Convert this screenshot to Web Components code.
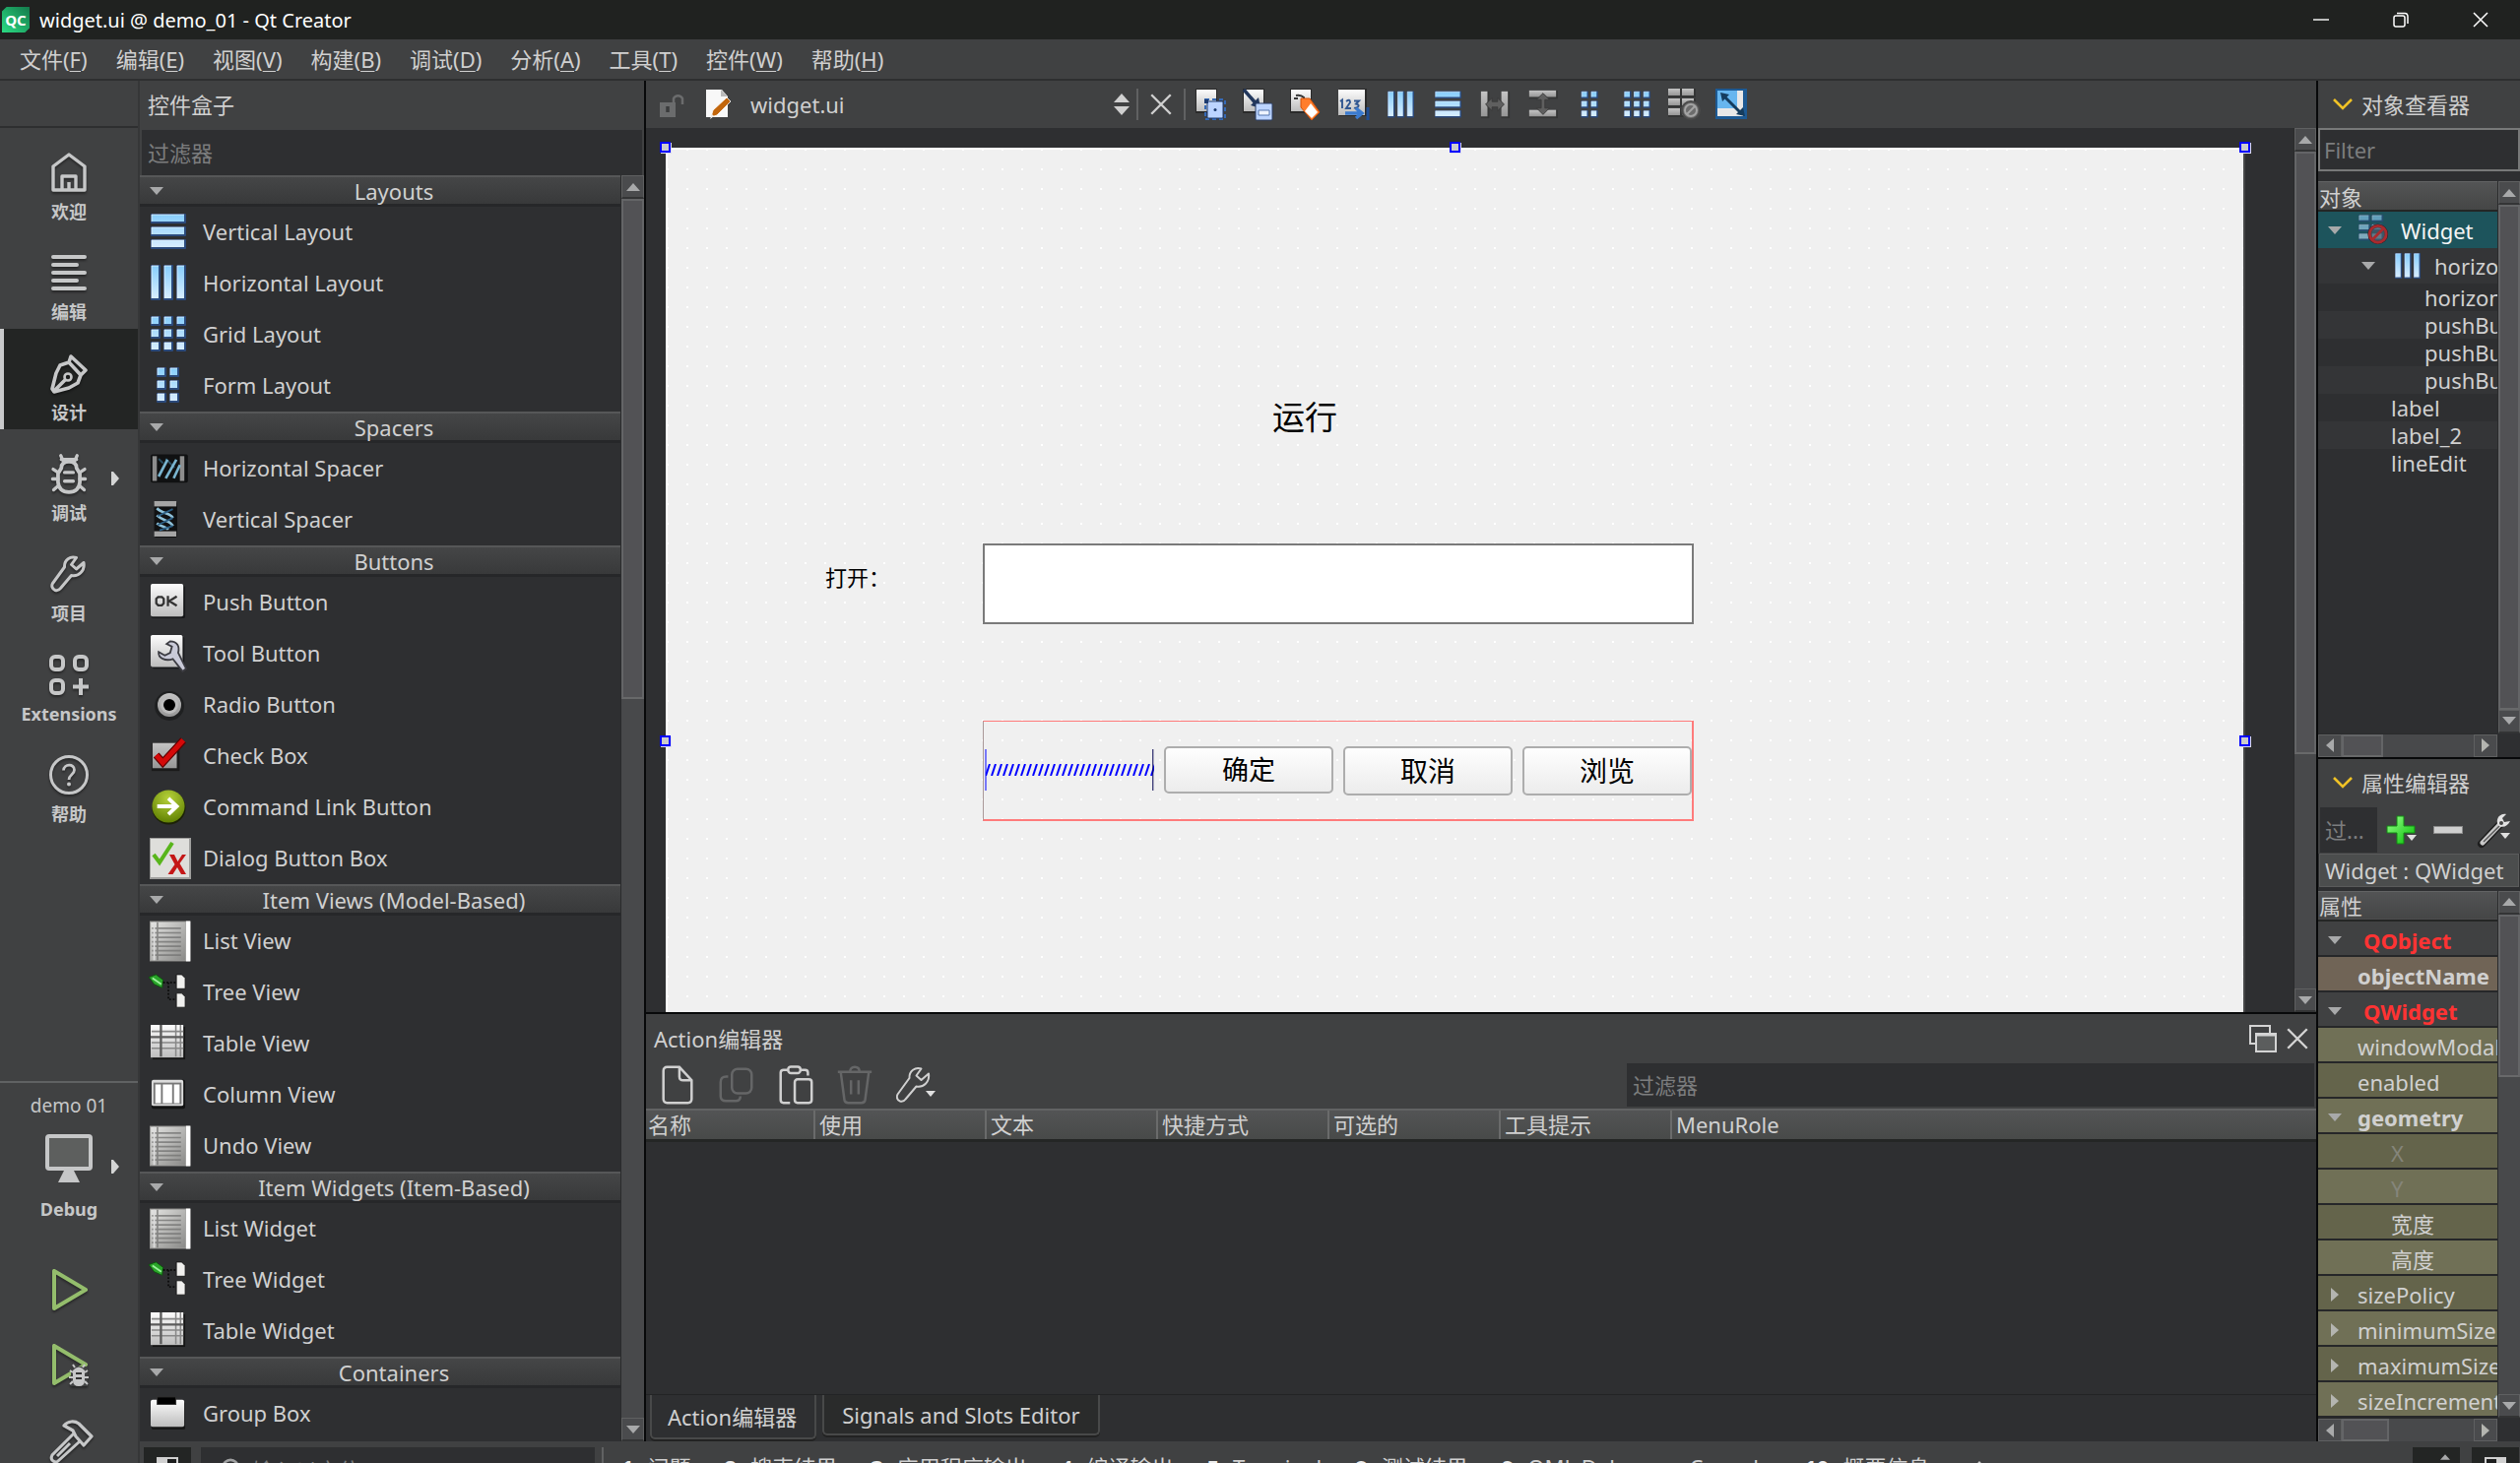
<!DOCTYPE html>
<html lang="zh-CN">
<head>
<meta charset="utf-8">
<title>widget.ui @ demo_01 - Qt Creator</title>
<style>
html,body{margin:0;height:100%;overflow:hidden;background:#2e2f30}
body{font:22px/28px "Noto Sans","Noto Sans CJK SC",sans-serif;color:#d0d0d0;
--panel:#404142;--dark:#2e2f31;--text:#d0d0d0;--dim:#7c7d7e;--line:#08090a;--deep:#232524}
</style>
</head>
<body>
<qc-window></qc-window>
<script>
const RESET = `<style>
*{box-sizing:border-box}
button,input{font:inherit;color:inherit;background:none;border:0;border-radius:0;margin:0;padding:0;outline:0}
button{text-align:inherit}
input::placeholder{color:var(--dim);opacity:1}
</style>`;
function define(name, css, html) {
  customElements.define(name, class extends HTMLElement {
    constructor() { super(); this.attachShadow({ mode: 'open' }); }
    connectedCallback() {
      this.shadowRoot.innerHTML = RESET + '<style>' + css + '</style>' + (typeof html === 'function' ? html(this) : html);
    }
  });
}

/* ---------- icon library ---------- */
const blueBar = (x, y, w, h) => `<rect x="${x}" y="${y}" width="${w + 1}" height="${h + 1}" rx="1" fill="#2b4a7c"/><rect x="${x + 1}" y="${y + 1}" width="${w - 2}" height="${h - 2}" fill="url(#b)"/><path d="M${x + 1} ${y + 1}h${w - 2}M${x + 1} ${y + 1}v${h - 2}" stroke="#f2faff" stroke-opacity=".7" fill="none"/>`;
const grayBar = (x, y, w, h) => `<rect x="${x}" y="${y}" width="${w + 1}" height="${h + 1}" fill="#2d2d2d" opacity=".6"/><rect x="${x}" y="${y}" width="${w - 1}" height="${h - 1}" fill="url(#g)"/>`;
const G = `<defs>
<linearGradient id="b" gradientUnits="userSpaceOnUse" x1="0" y1="0" x2="0" y2="36"><stop offset="0" stop-color="#85cdfc"/><stop offset="1" stop-color="#dcefff"/></linearGradient>
<linearGradient id="g" x1="0" y1="0" x2="0" y2="1"><stop offset="0" stop-color="#c4c4c4"/><stop offset="1" stop-color="#969696"/></linearGradient>
<linearGradient id="w" x1="0" y1="0" x2="0" y2="1"><stop offset="0" stop-color="#fcfcfc"/><stop offset="1" stop-color="#bdbdbd"/></linearGradient>
<linearGradient id="l" x1="0" y1="0" x2="1" y2="1"><stop offset="0" stop-color="#e4e4e2"/><stop offset="1" stop-color="#8a8a88"/></linearGradient>
<radialGradient id="r" cx=".5" cy=".25" r=".8"><stop offset="0" stop-color="#b6d13a"/><stop offset="1" stop-color="#5c7d00"/></radialGradient>
<linearGradient id="gr" x1="0" y1="0" x2="1" y2="1"><stop offset="0" stop-color="#9bff8e"/><stop offset="1" stop-color="#00c000"/></linearGradient></defs>`;
const tri = (c, d) => `<path d="${d}" fill="${c}"/>`;
const wrench = (sw) => `<path fill="none" stroke="currentColor" stroke-width="${sw}" stroke-linejoin="round" d="M27.5 3.5C21.500 1.500 15 5.500 15.500 13L3.500 29.500C2 32 3 35.500 6 36.500C8.500 37 10.500 36 11.500 34.500L22.500 21.500C29.500 23 36.500 17 35 8.500L27.500 15L22.500 10.500Z"/>`;
const bug = `<path fill="none" stroke="currentColor" stroke-width="3.400" stroke-linejoin="round" d="M11 14Q11 8 18 8T25 14L28 19V27Q27 36 18 36T8 27V19Z"/><path stroke="currentColor" stroke-width="3" stroke-linecap="round" fill="none" d="M13 8L10.500 2.500M23 8L25.500 2.500M11 6H25M8 18L3.500 15M28 18L32.500 15M8 24H3M28 24H33M8.500 30L4 34M27.500 30L32 34M14 18H22M14 26H22"/>`;
const listIcon = `<rect x="0" y="0" width="36" height="36" fill="#9a9a98"/><rect x="1" y="1" width="31" height="34" fill="url(#l)"/><path d="M7 1V35M2 6.500H28M2 10.500H28M2 14.500H28M2 18.500H28M2 22.500H28M2 26.500H28M2 30.500H28" stroke="#767674" stroke-width="1.500" fill="none" opacity=".8"/><path d="M4 1V35" stroke="#ddd" stroke-width="1.500"/><rect x="32.500" width="4" height="36" fill="#fff"/>`;
const sheet = `<rect x="0" y="0" width="22" height="25" fill="#2a2a2a"/><rect x="1" y="1" width="20" height="22" fill="url(#w)"/>`;
const ICONS = {
  vlayout: ['0 0 36 36', G + blueBar(0, 0, 35, 9) + blueBar(0, 13, 35, 9) + blueBar(0, 26, 35, 9)],
  hlayout: ['0 0 36 36', G + blueBar(0, 0, 9, 35) + blueBar(13, 0, 9, 35) + blueBar(26, 0, 9, 35)],
  grid: ['0 0 36 36', G + [0, 13, 26].map(y => [0, 13, 26].map(x => blueBar(x, y, 9, 9)).join('')).join('')],
  form: ['0 0 36 36', G + [0, 13, 26].map(y => [6, 19].map(x => blueBar(x, y, 9, 9)).join('')).join('')],
  hspacer: ['0 0 40 36', G + `<rect y="3" width="42" height="32" rx="2" fill="#101112"/><rect x="2" y="5" width="5" height="28" fill="#8d8d8d"/><rect x="33" y="5" width="5" height="28" fill="#8d8d8d"/><path d="M9 8L14 13M17 8L27 18" stroke="#294b5e" stroke-width="2"/><path d="M9 28L19 9M17 30L29 9M26 30L33 15" stroke="#79b4cf" stroke-width="3"/>`],
  vspacer: ['0 0 40 40', G + `<rect x="4" y="1" width="26" height="40" rx="2" fill="#101112"/><rect x="4" y="0" width="25" height="6" fill="#a5a5a5"/><rect x="4" y="34" width="25" height="6" fill="#a5a5a5"/><path d="M7 8C13 14 23 14 25 19M7 16C13 22 23 22 25 28M7 25C12 29 18 29 20 32" stroke="#8fc1d8" stroke-width="3" fill="none"/><path d="M25 9L8 17M25 19L8 27M25 28L10 33" stroke="#2c5f85" stroke-width="2"/>`],
  push: ['0 0 38 38', G + `<rect x="1" y="2" width="36" height="35" rx="2" fill="#17181a"/><rect x="0" y="0" width="35" height="35" rx="2" fill="url(#w)"/><path d="M8 14h4l2 2v5l-2 2h-4l-2-2v-5zM18.500 13v11M28 13.500l-8 5l8 5" stroke="#333" stroke-width="2.400" fill="none"/>`],
  tool: ['0 0 40 40', G + `<rect x="2" y="2" width="36" height="36" rx="2" fill="#17181a"/><rect x="0" y="0" width="36" height="36" rx="2" fill="url(#w)"/><path d="M22 7C30 7 33 13 31 20L40 38L36 41L25 27C17 30 8 26 9 19L16 23L22 20L24 13L18 10Z" fill="#c9cad8" stroke="#3c3c42" stroke-width="2"/>`],
  radio: ['0 0 36 36', G + `<circle cx="19" cy="20" r="15" fill="#1f2021"/><circle cx="19" cy="19" r="12" fill="url(#g)"/><circle cx="19" cy="19" r="9" fill="#bcbcbc"/><circle cx="19" cy="19" r="6" fill="#000"/>`],
  check: ['0 0 38 38', G + `<rect x="1" y="6" width="30" height="30" fill="#1b1b1b"/><rect x="2" y="6" width="26" height="27" fill="url(#g)"/><path d="M6 19l7 8L35 3" fill="none" stroke="#5d0000" stroke-width="8"/><path d="M6 19l7 8L35 3" fill="none" stroke="#d40909" stroke-width="5.500"/>`],
  command: ['0 0 38 38', G + `<circle cx="19.500" cy="20.500" r="18" fill="#1c2206"/><circle cx="19" cy="19" r="17.500" fill="url(#r)"/><path d="M7 19H26M19 10.500L28 19L19 27.500" fill="none" stroke="#fff" stroke-width="4"/>`],
  dialog: ['0 0 42 42', G + `<rect width="42" height="42" fill="#9f9f9d"/><rect x="1" y="1" width="39" height="39" fill="#dededb"/><path d="M4 17l6 8L23 5" fill="none" stroke="#58b51b" stroke-width="4"/><path d="M20 17h5l3.500 7L33 17h4l-6.500 9L37 37h-5l-4-7l-4.500 7h-5l7-10z" fill="#c41717"/>`],
  list: ['0 0 37 36', G + listIcon],
  tree: ['0 0 40 40', G + `<path d="M-2 4L6 1L14 7L13 16L4 12Z" fill="#2aa52a" stroke="#0c4f0c"/><path d="M2 5L12 12" stroke="#9df09d" stroke-width="2"/><path d="M14 10H28M20 10V29H28" stroke="#0d0d0d" stroke-width="2" stroke-dasharray="2 2" fill="none"/><path d="M29 1h6l4 4v12h-10zM29 22h6l4 4v12h-10z" fill="#f0f0ee" stroke="#151515"/>`],
  table: ['0 0 38 38', G + `<rect x="2" y="2" width="35" height="35" fill="#141414"/><rect x="0" y="0" width="35" height="35" fill="url(#w)"/><path d="M27 0V34M32 0V34M1 7H35M1 19H35M1 25H35" stroke="#888" stroke-width="1.600" fill="none"/><path d="M11 0V34M0 13H35" stroke="#5c5c5c" stroke-width="2.500"/>`],
  column: ['0 0 38 38', G + `<rect x="1" y="4" width="36" height="31" rx="2" fill="#131313"/><rect x="1" y="4" width="34" height="28" rx="2" fill="#dcdcdc"/><rect x="3" y="7" width="30" height="23" fill="#777"/><path d="M5 9h6v20H5zM13 9h10v20H13zM25 9h6v20H25z" fill="#fff"/>`],
  group: ['0 0 38 38', G + `<rect x="1" y="7" width="36" height="30" rx="2" fill="#161616"/><rect x="0" y="5" width="36" height="29" rx="2" fill="url(#w)"/><rect x="7" y="2" width="20" height="8" fill="#000" stroke="#333"/>`],
  home: ['0 0 40 42', `<path fill="none" stroke="currentColor" stroke-width="3.400" stroke-linejoin="round" d="M4 39V15L20 3L36 15V39ZM13 39V25H27V39M20 39V31"/>`],
  edit: ['0 0 40 42', `<path stroke="currentColor" stroke-width="4" stroke-linecap="round" d="M4 5H36M4 13H28M4 21H36M4 29H28M4 37H36"/>`],
  design: ['0 0 40 42', `<path fill="none" stroke="currentColor" stroke-width="3.600" stroke-linejoin="round" d="M22 4L37 18L32 23L29 31L20 36L5 40L3 37L7 21L11 13L20 10ZM20 10L32 23M5 39L17 27"/><circle cx="19" cy="25" r="3.500" fill="none" stroke="currentColor" stroke-width="2.600"/>`],
  bug: ['0 0 36 38', bug],
  wrench: ['0 0 40 40', wrench(3)],
  wrenchthin: ['0 0 40 40', wrench(2)],
  ext: ['0 0 40 42', `<g fill="none" stroke="currentColor" stroke-width="4"><rect x="2" y="3" width="12" height="13" rx="4"/><rect x="26" y="3" width="12" height="13" rx="4"/><rect x="2" y="27" width="12" height="13" rx="4"/><path d="M32 25V42M24 33.500H40"/></g>`],
  help: ['0 0 40 42', `<circle cx="20" cy="21" r="18.500" fill="none" stroke="currentColor" stroke-width="3"/><path d="M14.500 16.500C15 9.500 25.500 9.500 25.500 16C25.500 21 20 20.500 20 26" fill="none" stroke="currentColor" stroke-width="2.800"/><circle cx="20" cy="30.500" r="2" fill="currentColor"/>`],
  monitor: ['0 0 48 50', `<rect x="2" y="2" width="44" height="33" rx="2" fill="#5d5f5e" stroke="currentColor" stroke-width="4"/><path d="M19 37H29L35 49H13Z" fill="currentColor"/>`],
  play: ['0 0 38 44', `<path d="M3 3V41L35 22Z" fill="none" stroke="#94bd6c" stroke-width="4" stroke-linejoin="round"/>`],
  playbug: ['0 0 38 44', `<path d="M3 3V41L35 22Z" fill="none" stroke="#94bd6c" stroke-width="4" stroke-linejoin="round"/><path d="M20 44V27L24 24H37V44Z" fill="#404142"/><path d="M22 28Q28 21 34 28V38Q34 44 28 44T22 38Z" fill="#c6c7c8"/><path d="M24 25L22 22M32 25L34 22M22 30L19 28M34 30L37 28M22 35H18M34 35H38M22 39L19 42M34 39L37 42" stroke="#c6c7c8" stroke-width="2"/><path d="M25 31H31M25 36H31" stroke="#333" stroke-width="2"/>`],
  hammer: ['0 0 46 44', `<path d="M15 6C19 1 26 1 30 4L43 17L35 26L27 17L24 11Z" fill="none" stroke="currentColor" stroke-width="3.200" stroke-linejoin="round"/><path d="M25 14L3 36Q1 40 4 42T9 42L31 22M21 24L8 37" fill="none" stroke="currentColor" stroke-width="3"/>`],
  lock: ['0 0 24 26', `<path d="M14 12V7A5 5 0 0 1 23 7V13" fill="none" stroke="#6b6c6d" stroke-width="2.500"/><rect x="0" y="11" width="16" height="15" fill="#6b6c6d"/><path d="M8 15v6" stroke="#3a3b3c" stroke-width="3.500"/>`],
  uifile: ['0 0 30 32', `<path d="M1 1H17L23 8V29H1Z" fill="#f8f8f8"/><path d="M16 1V8H23Z" fill="#bbb"/><path d="M6 29L8 22L22 9L26 13L12 27Z" fill="#c2660c" stroke="#fff" stroke-width=".8"/><path d="M5 31L7 26L9 28Z" fill="#eee"/>`],
  updown: ['0 0 18 22', tri('#d0d0d0', 'M9 0L17 9H1Z') + tri('#d0d0d0', 'M9 22L17 13H1Z')],
  x: ['0 0 24 24', `<path d="M3 3L21 21M21 3L3 21" stroke="currentColor" stroke-width="2.200"/>`],
  editwidgets: ['0 0 32 32', G + sheet + `<path d="M10 11h20v20H10z" fill="none" stroke="#3569b5" stroke-width="2" stroke-dasharray="4 3"/><rect x="12" y="13" width="16" height="17" rx="1" fill="#bcd4ff" stroke="#1d3b70"/><circle cx="20" cy="21.500" r="1.500" fill="#1d3b70"/><rect x="9" y="11" width="4" height="4" fill="#1d3b70"/>`],
  signals: ['0 0 32 32', G + sheet + `<path d="M1 1L15 17" stroke="#22375c" stroke-width="3.500"/><path d="M18 20L8 17L16 9Z" fill="#22375c"/><rect x="13" y="15" width="17" height="17" rx="1" fill="#bcd4ff" stroke="#2a3f66"/><path d="M16 22h11v5H16z" fill="#eef4ff" stroke="#5576ad"/>`],
  buddies: ['0 0 32 32', G + sheet + `<path d="M4 10h4M6 7q5-1 8 2v6" stroke="#333" stroke-width="2" fill="none"/><path d="M11 10L20 10L30 24L22 32L11 19Z" fill="#ff7d2c" stroke="#d65208"/><path d="M21 15L28 24L22 30L15 23Z" fill="#fff"/>`],
  tab: ['0 0 32 32', G + `<rect x="2" y="0" width="28" height="28" fill="#2a2a2a"/><rect x="1" y="1" width="27" height="26" fill="url(#w)"/><path d="M3 13l2-1.500V20M9 13q4-3 4 1L9 20h5M17 12.500h5l-3 3q4 1 2 3t-4 1" stroke="#315791" stroke-width="1.900" fill="none"/><path d="M8 25H24M19 20L25 25L19 30" stroke="#3b7bd0" stroke-width="3.500" fill="none"/><path d="M31 19V32" stroke="#1f4d93" stroke-width="3"/>`],
  hsplit: ['0 0 34 34', G + grayBar(2, 3, 8, 28) + grayBar(24, 3, 8, 28) + `<path d="M7 17L14 10V14H20V10L27 17L20 24V20H14V24Z" fill="#5f5f5f" stroke="#3a3a3a"/>`],
  vsplit: ['0 0 34 34', G + grayBar(3, 2, 30, 8) + grayBar(3, 23, 30, 8) + `<path d="M18 5L25 12H20V21H25L18 28L11 21H16V12H11Z" fill="#5f5f5f" stroke="#3a3a3a"/>`],
  breaklay: ['0 0 32 32', G + [0, 10, 20].map(y => grayBar(0, y, 13, 8) + grayBar(14, y, 13, 8)).join('') + `<circle cx="23" cy="22" r="9" fill="#6c6c6c" stroke="#4a4a4a" stroke-width="2"/><circle cx="23" cy="22" r="6" fill="none" stroke="#a4a4a4" stroke-width="2"/><path d="M19 26L27 18" stroke="#a4a4a4" stroke-width="2"/>`],
  breakcolor: ['0 0 34 34', G + [0, 10, 20].map(y => blueBar(1, y, 12, 7) + blueBar(15, y, 12, 7)).join('') + `<rect width="34" height="28" fill="#1d545c" opacity=".4"/><circle cx="22" cy="21" r="9" fill="none" stroke="#2c1c22" stroke-width="4"/><circle cx="22" cy="21" r="9" fill="#4e5a66" fill-opacity=".6" stroke="#a82b2e" stroke-width="3"/><path d="M16 27L28 15" stroke="#a82b2e" stroke-width="3"/>`],
  adjust: ['0 0 32 32', G + `<rect x="0" y="0" width="32" height="31" fill="#1d5a94"/><rect x="2" y="2" width="26" height="26" fill="#e8e8e8"/><rect x="2" y="2" width="20" height="18" fill="#67b6ef"/><path d="M8 7L26 25" stroke="#153c5e" stroke-width="3"/><path d="M5 4L14 6L7 13ZM30 28L21 26L28 19Z" fill="#153c5e"/>`],
  file: ['0 0 40 44', `<path d="M5 7Q5 3 9 3H22L35 17V37Q35 41 31 41H9Q5 41 5 37ZM22 3V13Q22 17 26 17H35" fill="none" stroke="currentColor" stroke-width="2.600"/>`],
  copy: ['0 0 40 44', `<rect x="15" y="5" width="21" height="26" rx="6" fill="none" stroke="currentColor" stroke-width="2.600"/><path d="M11 13H9Q3 13 3 19V34Q3 39 9 39H19Q24 39 24 34" fill="none" stroke="currentColor" stroke-width="2.600"/>`],
  paste: ['0 0 40 44', `<path d="M14 41H7Q4 41 4 38V9Q4 6 7 6H30Q33 6 33 9V12" fill="none" stroke="currentColor" stroke-width="2.600"/><rect x="12" y="2.500" width="13" height="7" rx="3" fill="#404142" stroke="currentColor" stroke-width="2.600"/><rect x="19" y="16" width="18" height="25" rx="3" fill="none" stroke="currentColor" stroke-width="2.600"/>`],
  trash: ['0 0 40 44', `<path d="M2 8H38M5 8L9 38Q9.500 41 13 41H27Q30.500 41 31 38L35 8M15 8Q15 3 20 3T25 8M16 17V32M24 17V32" fill="none" stroke="currentColor" stroke-width="2.600"/>`],
  restore: ['0 0 28 28', `<path d="M21 8V1H1V19H7" fill="none" stroke="#d4d4d4" stroke-width="2"/><rect x="7" y="9" width="20" height="18" fill="#5b5d5d" stroke="#d4d4d4" stroke-width="2"/><path d="M6 10H28" stroke="#d4d4d4" stroke-width="3"/>`],
  chevron: ['0 0 22 14', `<path d="M2 2L11 11L20 2" fill="none" stroke="#f0c226" stroke-width="2.600"/>`],
  plus: ['0 0 30 30', G + `<path d="M11 1H18V11H29V18H18V29H11V18H1V11H11Z" fill="url(#gr)" stroke="#128a12"/>`],
  minus: ['0 0 30 8', `<rect width="30" height="8" fill="#8b8b8b"/><rect x="1" y="1" width="28" height="6" fill="#cfcfcf"/>`],
  steelwrench: ['0 0 34 34', `<path d="M3 31L22 11" stroke="#1e1e1e" stroke-width="8" stroke-linecap="round"/><path d="M4 30L22 11" stroke="#c9c9c9" stroke-width="5" stroke-linecap="round"/><path d="M5 29L21 13" stroke="#555" stroke-width="1.500"/><path d="M28 1C21 0 18 5 19 11C23 16 29 14 32 8L26 9L24 5Z" fill="#e2e2e2"/><circle cx="23" cy="10" r="2" fill="#444"/>`],
  min: ['0 0 16 16', `<path d="M0 8H16" stroke="#fff" stroke-width="1.400"/>`],
  max: ['0 0 16 16', `<rect x="1" y="4" width="11" height="11" rx="2" fill="none" stroke="#fff" stroke-width="1.500"/><path d="M4 1.500H12Q15 1.500 15 5V12" fill="none" stroke="#fff" stroke-width="1.500"/>`],
  close: ['0 0 16 16', `<path d="M1 1L15 15M15 1L1 15" stroke="#fff" stroke-width="1.500"/>`],
  down: ['0 0 14 8', tri('#a8a9aa', 'M0 0H14L7 8Z')],
  downlight: ['0 0 10 6', tri('#e0e0e0', 'M0 0H10L5 6Z')],
  up: ['0 0 14 8', tri('#a8a9aa', 'M0 8H14L7 0Z')],
  left: ['0 0 8 14', tri('#a8a9aa', 'M8 0V14L0 7Z')],
  right: ['0 0 8 14', tri('#b4b5b0', 'M0 0V14L8 7Z')],
  rightlight: ['0 0 8 14', tri('#d4d5d5', 'M0 0H2L8 7L2 14H0Z')],
  search: ['0 0 24 24', `<circle cx="11" cy="11" r="8" fill="none" stroke="#a0a1a2" stroke-width="3"/><path d="M17 17L23 23" stroke="#a0a1a2" stroke-width="3"/>`],
  side: ['0 0 22 18', `<rect x="1" y="1" width="20" height="16" fill="#1d1e1e" stroke="#d0d0d0" stroke-width="2"/><rect x="12" y="0" width="10" height="18" fill="#d0d0d0"/>`],
  sideleft: ['0 0 22 18', `<rect x="1" y="1" width="20" height="16" fill="#1d1e1e" stroke="#d0d0d0" stroke-width="2"/><rect x="0" y="0" width="11" height="18" fill="#d0d0d0"/>`],
  qc: ['0 0 30 28', `<defs><linearGradient id="q" x1="0" y1="1" x2="1" y2="0"><stop offset="0" stop-color="#2bdc83"/><stop offset="1" stop-color="#137a4b"/></linearGradient></defs><path d="M5 0H30V23L25 28H0V5Z" fill="url(#q)"/>`],
};
define('qc-icon', `:host{display:block;flex:none;line-height:0}svg{display:block;width:100%;height:100%;overflow:visible}`,
  el => { const [vb, body] = ICONS[el.getAttribute('name')]; return `<svg viewBox="${vb}" aria-hidden="true">${body}</svg>`; });

/* ---------- small parts ---------- */
define('qc-scrollbar', `
:host{display:flex;flex-direction:column;width:23px;flex:none;background:#48494b;border-left:1px solid #2a2b2c}
:host([horizontal]){flex-direction:row;width:auto;height:24px;border-left:0;border-top:1px solid #2a2b2c}
button{flex:none;display:flex;align-items:center;justify-content:center;width:100%;height:24px;background:#4a4b4d;border:1px solid #5f6061;border-bottom:2px solid #333435}
:host([horizontal]) button{width:24px;height:100%;border:1px solid #5f6061}
.track{flex:1;min-width:0;min-height:0}
.thumb{background:#525255;border:2px solid #646567;border-bottom-color:#68696a;width:100%;height:var(--thumb)}
:host([horizontal]) .thumb{height:100%;width:var(--thumb)}
.v{width:14px;height:8px}.h{width:8px;height:14px}`,
  el => { const h = el.hasAttribute('horizontal'), c = h ? 'h' : 'v';
    return `<button aria-label="back"><qc-icon class="${c}" name="${h ? 'left' : 'up'}"></qc-icon></button><div class="track"><div class="thumb"></div></div><button aria-label="forward"><qc-icon class="${c}" name="${h ? 'right' : 'down'}"></qc-icon></button>`; });

define('qc-titlebar', `
:host{display:flex;align-items:center;height:40px;flex:none;background:#202220;color:#fff;font-size:20px;padding-left:2px}
.logo{display:grid;place-items:center;width:28px;height:28px;font-size:15px;line-height:28px;font-weight:700;margin-right:10px}
.logo>*{grid-area:1/1}.logo qc-icon{width:28px;height:28px}
.t{flex:1;padding-top:2px}
button{width:81px;height:40px;display:grid;place-items:center}button qc-icon{width:16px;height:16px}`,
  `<div class="logo"><qc-icon name="qc"></qc-icon><span>QC</span></div><span class="t">widget.ui @ demo_01 - Qt Creator</span>
<button aria-label="minimize"><qc-icon name="min"></qc-icon></button><button aria-label="restore"><qc-icon name="max"></qc-icon></button><button aria-label="close"><qc-icon name="close"></qc-icon></button>`);

define('qc-menubar', `
:host{display:flex;align-items:center;gap:29px;height:42px;flex:none;background:var(--panel);border-bottom:2px solid #2e2f30;padding-left:20px}
u{text-decoration-thickness:1px;text-underline-offset:3px}`,
  ['文件,F', '编辑,E', '视图,V', '构建,B', '调试,D', '分析,A', '工具,T', '控件,W', '帮助,H'].map(m => { const [a, b] = m.split(','); return `<button>${a}(<u>${b}</u>)</button>`; }).join(''));

define('qc-mode', `
:host{display:block;flex:none}
button{position:relative;display:flex;flex-direction:column;align-items:center;gap:9px;width:100%;height:102px;padding-top:24px;color:#c6c7c8;font-weight:700;font-size:18px;line-height:20px;white-space:nowrap}
:host([active]) button{background:var(--deep);box-shadow:inset 4px 0 #c9cacb}
.i{width:40px;height:42px;filter:drop-shadow(0 2px 1px #0006)}
.a{position:absolute;left:113px;top:43px;width:8px;height:14px}`,
  el => `<button><qc-icon class="i" name="${el.getAttribute('icon')}"></qc-icon>${el.hasAttribute('arrow') ? '<qc-icon class="a" name="rightlight"></qc-icon>' : ''}<slot></slot></button>`);

define('qc-modebar', `
:host{display:flex;flex-direction:column;width:142px;flex:none;background:var(--panel);border-right:2px solid #363738;color:#c6c7c8;overflow:hidden}
.top{height:48px;border-bottom:2px solid #2e2f30;flex:none}
.grow{flex:1}
.kit{border-top:2px solid #606263;display:flex;flex-direction:column;align-items:center;flex:none;height:388px;padding-top:13px;font-size:19px;line-height:20px}
.kit button{display:block;filter:drop-shadow(0 2px 1px #0006)}
.target{position:relative;width:100%;display:flex;flex-direction:column;align-items:center;gap:16px;font-size:18px}
.m{width:48px;height:50px;margin-top:19px}
.target .a{position:absolute;left:113px;top:45px;width:8px;height:14px}
b{line-height:20px}
.p{width:38px;height:44px;margin-left:2px}.p1{margin-top:50px}.p2{margin-top:32px}
.hm{width:46px;height:44px;margin-top:34px;margin-left:6px}`,
  `<div class="top"></div>
<qc-mode icon="home">欢迎</qc-mode><qc-mode icon="edit">编辑</qc-mode><qc-mode icon="design" active>设计</qc-mode><qc-mode icon="bug" arrow>调试</qc-mode><qc-mode icon="wrench">项目</qc-mode><qc-mode icon="ext">Extensions</qc-mode><qc-mode icon="help">帮助</qc-mode>
<div class="grow"></div>
<div class="kit"><span>demo 01</span>
<div class="target"><qc-icon class="m" name="monitor"></qc-icon><qc-icon class="a" name="rightlight"></qc-icon><b>Debug</b></div>
<button class="p1" aria-label="run"><qc-icon class="p" name="play"></qc-icon></button><button class="p2" aria-label="debug run"><qc-icon class="p" name="playbug"></qc-icon></button><button aria-label="build"><qc-icon class="hm" name="hammer"></qc-icon></button></div>`);

/* ---------- widget box ---------- */
define('qc-group', `
:host{display:block;flex:none}
header{display:flex;align-items:center;height:32px;background:linear-gradient(#454647,#38393a);border-top:2px solid #565758;border-bottom:3px solid #262729;padding-left:10px}
header qc-icon{width:14px;height:8px;margin-right:4px}
header span{flex:1;text-align:center}`,
  el => `<header><qc-icon name="down"></qc-icon><span>${el.getAttribute('label')}</span></header><slot></slot>`);
define('qc-item', `
:host{display:flex;align-items:center;gap:16px;height:52px;padding:0 0 2px 10px}
.b{width:38px;height:40px;display:grid;place-items:center}
.b qc-icon{width:36px;height:36px}
.b.big qc-icon{width:42px;height:42px}`,
  el => `<span class="b ${['dialog', 'list'].includes(el.getAttribute('icon')) ? 'big' : ''}"><qc-icon name="${el.getAttribute('icon')}"></qc-icon></span><slot></slot>`);
const GROUPS = [
  ['Layouts', 'vlayout:Vertical Layout', 'hlayout:Horizontal Layout', 'grid:Grid Layout', 'form:Form Layout'],
  ['Spacers', 'hspacer:Horizontal Spacer', 'vspacer:Vertical Spacer'],
  ['Buttons', 'push:Push Button', 'tool:Tool Button', 'radio:Radio Button', 'check:Check Box', 'command:Command Link Button', 'dialog:Dialog Button Box'],
  ['Item Views (Model-Based)', 'list:List View', 'tree:Tree View', 'table:Table View', 'column:Column View', 'list:Undo View'],
  ['Item Widgets (Item-Based)', 'list:List Widget', 'tree:Tree Widget', 'table:Table Widget'],
  ['Containers', 'group:Group Box'],
];
define('qc-widgetbox', `
:host{display:flex;flex-direction:column;width:514px;flex:none;background:var(--dark);border-right:2px solid var(--line);min-height:0}
h2{margin:0;font:inherit;height:48px;line-height:48px;padding-left:8px;background:var(--panel);flex:none}
.f{background:var(--panel);padding:2px;height:48px;flex:none}
input{width:100%;height:46px;background:var(--dark);padding-left:6px}
.body{display:flex;flex:1;min-height:0}
.list{flex:1;overflow:hidden}
qc-scrollbar{width:24px;--thumb:41%}`,
  `<h2>控件盒子</h2><div class="f"><input placeholder="过滤器" aria-label="过滤器"></div><div class="body"><div class="list">` +
  GROUPS.map(([g, ...it]) => `<qc-group label="${g}">${it.map(s => { const [i, t] = s.split(':'); return `<qc-item icon="${i}">${t}</qc-item>`; }).join('')}</qc-group>`).join('') +
  `</div><qc-scrollbar></qc-scrollbar></div>`);

/* ---------- form editor ---------- */
define('qc-editorbar', `
:host{display:flex;align-items:center;height:48px;flex:none;background:var(--panel);padding-left:14px}
.lock{width:24px;height:26px;margin-right:22px}.ui{width:30px;height:32px;margin-right:16px}
.n{width:368px}.ud{width:18px;height:22px;margin-right:6px}
i{width:2px;height:32px;background:#606162}
.c{width:46px;height:48px;display:grid;place-items:center}.c qc-icon{width:26px;height:26px;color:#d0d0d0}
.t{display:flex;margin-left:2px}.t button{width:48px;height:48px;display:grid;place-items:center}
.t qc-icon{width:32px;height:32px}.t .s{width:27px;height:28px}`,
  `<qc-icon class="lock" name="lock"></qc-icon><qc-icon class="ui" name="uifile"></qc-icon><span class="n">widget.ui</span><qc-icon class="ud" name="updown"></qc-icon><i></i><button class="c" aria-label="close document"><qc-icon name="x"></qc-icon></button><i></i><div class="t">` +
  ['editwidgets', 'signals', 'buddies', 'tab', 'hlayout', 'vlayout', 'hsplit', 'vsplit', 'form', 'grid', 'breaklay', 'adjust'].map(n => `<button aria-label="${n}"><qc-icon class="${['hlayout', 'vlayout', 'form', 'grid'].includes(n) ? 's' : ''}" name="${n}"></qc-icon></button>`).join('') + `</div>`);

/* Widgets sit at free coordinates on the form being designed. */
define('qc-canvas', `
:host{display:flex;flex:1;min-height:0;background:var(--dark)}
.view{flex:1;overflow:hidden;padding:20px 49px 0 20px}
.form{position:relative;height:1204px;background:#f0f0f0;border:2px solid #fff;border-right-color:#454647;border-bottom:0;color:#000}
svg.dots{position:absolute;inset:0;width:100%;height:100%}
.h{position:absolute;width:11px;height:11px;background:#ccc;border:2px solid #00f;box-shadow:1px 1px #dde;margin:-6px 0 0 -6px}
label,.run,.layout,.edit{position:absolute}
.run{left:614px;top:252px;font-size:33px;line-height:40px}
label{left:160px;top:420px}
.edit{left:320px;top:400px;width:722px;height:82px;background:#fff;border:2px solid #7a7a7a}
.layout{left:320px;top:580px;width:722px;height:102px;display:flex;align-items:flex-start;gap:10px;border:solid #ff7b7b;border-left-color:#a99;border-width:1px 2px 2px 1px;padding:25px 0 0 1px}
.layout button{width:172px;height:50px;border:2px solid #adadad;border-radius:5px;background:linear-gradient(#fefefe,#ececec);text-align:center;font-size:28px}
.layout .first{height:48px;font-size:27px}
.sp{flex:1;height:42px;margin-top:3px}
qc-scrollbar{--thumb:72%}`,
  `<div class="view"><div class="form">
<svg class="dots" aria-hidden="true"><defs><pattern id="e" width="20" height="20" x="-1" y="-1" patternUnits="userSpaceOnUse"><rect width="2" height="2" fill="#fff"/></pattern></defs><rect width="100%" height="100%" fill="url(#e)"/></svg>
<span class="run">运行</span><label for="cmd">打开：</label><input id="cmd" class="edit">
<div class="layout"><svg class="sp" aria-hidden="true"><defs><pattern id="z" width="6" height="12" y="15" patternUnits="userSpaceOnUse"><path d="M1 12L5 0" stroke="#00f" stroke-width="2"/></pattern></defs><rect x="1" y="15" width="100%" height="12" fill="url(#z)"/><path d="M1 0V42" stroke="#00f"/><rect x="99%" width="1" height="42" fill="#000050"/></svg><button class="first">确定</button><button>取消</button><button>浏览</button></div>
<span class="h" style="left:-2px;top:-2px"></span><span class="h" style="left:50%;top:-2px"></span><span class="h" style="left:calc(100% + 2px);top:-2px"></span><span class="h" style="left:-2px;top:50%"></span><span class="h" style="left:calc(100% + 2px);top:50%"></span>
</div></div><qc-scrollbar></qc-scrollbar>`);

/* ---------- action editor ---------- */
define('qc-actions', `
:host{display:flex;flex-direction:column;height:436px;flex:none;background:var(--dark);border-top:2px solid var(--line)}
header{display:flex;align-items:center;height:50px;background:var(--panel);padding:0 6px 0 8px;flex:none}
header span{flex:1}header button{height:28px}
.r{width:28px;height:28px}.x{width:26px;height:26px;margin-left:8px;color:#d4d4d4}
.bar{display:flex;height:46px;background:var(--panel);flex:none;padding:0 2px 2px 10px}
.bar button{width:60px;height:44px;position:relative;padding-left:2px}
.bar qc-icon{width:40px;height:42px}.bar [disabled]{color:#656667}
.bar .a{position:absolute;left:34px;top:28px;width:10px;height:6px}
.gap{flex:1}
.bar input{width:698px;background:var(--dark);padding-left:6px}
table{width:100%;table-layout:fixed;border-collapse:collapse;flex:none}
th{height:31px;padding:0 0 0 4px;text-align:left;font-weight:400;line-height:26px;background:linear-gradient(#535455,#484a49);border-top:2px solid #626364;border-bottom:3px solid #242625;width:174px}
th:first-child{width:171px;padding-left:2px}
th+th{border-left:2px solid #6a6b6b}th:last-child{width:auto}
.body{flex:1}
nav{display:flex;align-items:flex-start;gap:6px;height:48px;border-top:1px solid #232425;padding-left:4px;flex:none}
nav button{background:#2a2b2b;border:2px solid #484949;border-top:0;border-radius:0 0 5px 5px;height:41px;padding:0 18px;box-shadow:0 2px #222}
nav .on{background:var(--dark);height:45px;padding:0 18px 0 16px}`,
  `<header><span>Action编辑器</span><button aria-label="float"><qc-icon class="r" name="restore"></qc-icon></button><button aria-label="close"><qc-icon class="x" name="x"></qc-icon></button></header>
<div class="bar"><button aria-label="new"><qc-icon name="file"></qc-icon></button><button disabled aria-label="copy"><qc-icon name="copy"></qc-icon></button><button aria-label="paste"><qc-icon name="paste"></qc-icon></button><button disabled aria-label="delete"><qc-icon name="trash"></qc-icon></button><button aria-label="configure"><qc-icon name="wrenchthin"></qc-icon><qc-icon class="a" name="downlight"></qc-icon></button><span class="gap"></span><input placeholder="过滤器" aria-label="过滤器"></div>
<table><thead><tr><th>名称</th><th>使用</th><th>文本</th><th>快捷方式</th><th>可选的</th><th>工具提示</th><th>MenuRole</th></tr></thead></table>
<div class="body"></div><nav><button class="on">Action编辑器</button><button>Signals and Slots Editor</button></nav>`);

/* ---------- right docks ---------- */
define('qc-docktitle', `:host{display:flex;align-items:center;gap:8px;height:48px;flex:none;background:var(--panel);padding-left:14px}qc-icon{width:22px;height:14px}`,
  `<qc-icon name="chevron"></qc-icon><slot></slot>`);
define('qc-inspector', `
:host{display:flex;flex-direction:column;flex:1;min-height:0;background:var(--dark);border-bottom:2px solid var(--line)}
input{width:100%;height:44px;flex:none;border:2px solid #787979;padding-left:4px;margin-bottom:10px}
.main{display:flex;flex:1;min-height:0}.tree{flex:1;min-width:0;overflow:hidden}
.hd{height:31px;line-height:30px;padding-left:1px;background:linear-gradient(#535455,#454646);border-top:1px solid #626364;border-bottom:2px solid #242625}
.row{display:flex;align-items:center;height:28px;white-space:nowrap;padding-left:var(--in)}
.row:nth-child(odd){background:#343537}
.row.t{height:36px}.row.sel{height:37px;background:#1d545c;color:#f4f4f4}
.ar{width:14px;height:8px;margin-right:16px}.ic{width:32px;height:32px;margin-right:12px}.ic.s{width:26px;height:26px;margin:0 14px 0 4px}
.foot{display:flex}.foot qc-scrollbar{flex:1;--thumb:31%}.foot i{width:23px}
.main qc-scrollbar{--thumb:100%}`,
  `<qc-docktitle>对象查看器</qc-docktitle><input placeholder="Filter" aria-label="Filter">
<div class="main"><div class="tree"><div class="hd">对象</div>
<div class="row t sel" style="--in:10px"><qc-icon class="ar" name="down"></qc-icon><qc-icon class="ic" name="breakcolor"></qc-icon>Widget</div>
<div class="row t" style="--in:44px"><qc-icon class="ar" name="down"></qc-icon><qc-icon class="ic s" name="hlayout"></qc-icon>horizontalLayout</div>
<div class="row" style="--in:108px">horizontalSpacer</div><div class="row" style="--in:108px">pushButton</div><div class="row" style="--in:108px">pushButton_2</div><div class="row" style="--in:108px">pushButton_3</div>
<div class="row" style="--in:74px">label</div><div class="row" style="--in:74px">label_2</div><div class="row" style="--in:74px">lineEdit</div></div><qc-scrollbar></qc-scrollbar></div>
<div class="foot"><qc-scrollbar horizontal></qc-scrollbar><i></i></div>`);

const PROPS = [['g', 'QObject', 'down'], ['n b', 'objectName'], ['g', 'QWidget', 'down'], ['e', 'windowModality'], ['o', 'enabled'], ['e b', 'geometry', 'down'], ['o sub dis', 'X'], ['e sub dis', 'Y'], ['o sub', '宽度'], ['e sub', '高度'], ['o', 'sizePolicy', 'right'], ['e', 'minimumSize', 'right'], ['o', 'maximumSize', 'right'], ['e', 'sizeIncrement', 'right']];
define('qc-properties', `
:host{display:flex;flex-direction:column;flex:none;background:var(--dark)}
.bar{display:flex;align-items:center;height:48px;background:var(--panel);padding-left:2px}
.bar input{width:58px;height:46px;background:var(--dark);padding-left:5px;margin-right:9px;text-overflow:ellipsis}
.bar button{position:relative;margin-right:18px}.bar button+button+button{margin:0 0 0 -2px}
.p{width:30px;height:30px}.m{width:30px;height:8px}.w{width:34px;height:34px}
.a{position:absolute;left:21px;top:20px;width:10px;height:6px}.w+.a{left:22px}
.obj{height:34px;line-height:33px;padding-left:5px;background:#4b4d4d;border:1px solid #5a5b5b;margin:0 1px 4px;white-space:nowrap;overflow:hidden}
.main{display:flex}.tv{flex:1;min-width:0;overflow:hidden}
table{width:100%;border-collapse:collapse;table-layout:fixed}
th{height:30px;padding:0 0 0 1px;text-align:left;font-weight:400;line-height:28px;background:linear-gradient(#535455,#454646);border-top:1px solid #626364;border-bottom:2px solid #242625}
td{height:36px;padding:0;border-bottom:2px solid #262729}
td div{display:flex;align-items:center;height:34px;white-space:nowrap;overflow:hidden;padding:3px 0 0 10px}
td span{width:30px;flex:none;display:grid;justify-content:start}
.down{width:14px;height:8px}.right{width:8px;height:14px;margin-left:3px}
.g{background:var(--panel);color:#f33;font-weight:700}.g span{width:36px}.n{background:#706456}.b{font-weight:700}
.e{background:#707056}.o{background:#64644b}.sub span{width:64px}.dis{color:#85857a}
.foot{display:flex}.foot qc-scrollbar{flex:1;--thumb:36%}.foot i{width:23px}.main qc-scrollbar{--thumb:34%}`,
  `<qc-docktitle>属性编辑器</qc-docktitle><div class="bar"><input placeholder="过..." aria-label="过滤器"><button aria-label="add"><qc-icon class="p" name="plus"></qc-icon><qc-icon class="a" name="downlight"></qc-icon></button><button aria-label="remove"><qc-icon class="m" name="minus"></qc-icon></button><button aria-label="configure"><qc-icon class="w" name="steelwrench"></qc-icon><qc-icon class="a" name="downlight"></qc-icon></button></div>
<div class="obj">Widget : QWidget</div><div class="main"><div class="tv"><table><thead><tr><th>属性</th></tr></thead><tbody>` +
  PROPS.map(([c, t, a]) => `<tr><td class="${c}"><div><span>${a ? `<qc-icon class="${a}" name="${a}"></qc-icon>` : ''}</span>${t}</div></td></tr>`).join('') +
  `</tbody></table></div><qc-scrollbar></qc-scrollbar></div><div class="foot"><qc-scrollbar horizontal></qc-scrollbar><i></i></div>`);

/* ---------- status bar ---------- */
define('qc-status', `
:host{display:flex;height:22px;flex:none;background:var(--panel);overflow:hidden;padding:6px 1px 0 4px;align-items:flex-start}
.k{width:48px;height:40px;background:var(--deep);display:flex;justify-content:center;padding-top:10px;flex:none}
.k .s{width:22px;height:18px}.k .u{width:10px;height:6px;margin:-3px 0 0 18px}
.q{display:flex;width:400px;height:40px;margin-left:10px;background:var(--dark);padding:10px 0 0 20px;gap:10px;flex:none}
.q qc-icon{width:22px;height:22px}.q input{flex:1;height:30px;margin-top:-2px}
i{width:2px;height:30px;background:#606162;margin:0 18px 0 7px}
.o{display:flex;gap:34px;flex:1;padding-top:6px;line-height:28px;white-space:nowrap}.o b{color:#eee;margin-right:14px}
.o qc-icon{width:10px;height:18px;margin:5px 0 0 12px}
.k+.k{margin-left:12px}`,
  `<button class="k" aria-label="toggle left sidebar"><qc-icon class="s" name="sideleft"></qc-icon></button><div class="q"><qc-icon name="search"></qc-icon><input placeholder="输入以定位(Ctrl+K)" aria-label="输入以定位"></div><i></i><div class="o">` +
  ['1:问题', '2:搜索结果', '3:应用程序输出', '4:编译输出', '5:Terminal', '8:测试结果', '9:QML Debugger Console', '10:概要信息'].map(s => { const [n, t] = s.split(':'); return `<button><b>${n}</b>${t}</button>`; }).join('') +
  `<qc-icon name="updown"></qc-icon></div><button class="k" aria-label="progress"><qc-icon class="u" name="up"></qc-icon></button><button class="k" aria-label="toggle right sidebar"><qc-icon class="s" name="side"></qc-icon></button>`);

/* ---------- window ---------- */
define('qc-window', `
:host{display:flex;flex-direction:column;height:100vh}
.work{display:flex;flex:1;min-height:0}
.col{display:flex;flex-direction:column;flex:1;min-width:0;min-height:0}
.split{display:flex;flex:1;min-height:0}
aside{display:flex;flex-direction:column;width:207px;flex:none;border-left:2px solid var(--line)}`,
  `<qc-titlebar></qc-titlebar><qc-menubar></qc-menubar>
<div class="work"><qc-modebar></qc-modebar><div class="col"><div class="split"><qc-widgetbox></qc-widgetbox><div class="col"><qc-editorbar></qc-editorbar><qc-canvas></qc-canvas><qc-actions></qc-actions></div><aside><qc-inspector></qc-inspector><qc-properties></qc-properties></aside></div><qc-status></qc-status></div></div>`);
</script>
</body>
</html>
